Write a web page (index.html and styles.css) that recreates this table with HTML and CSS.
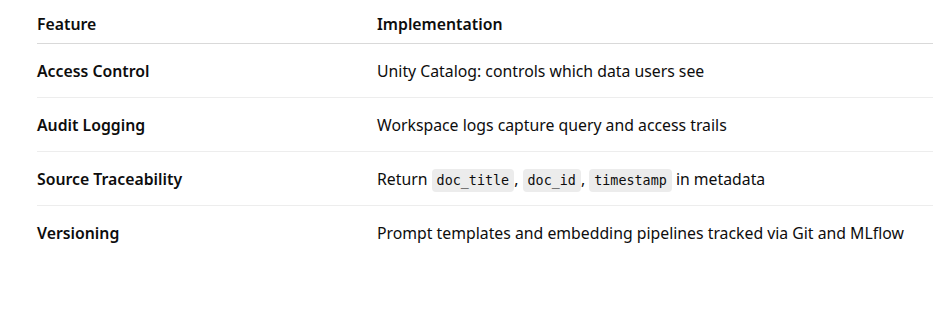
FILE: index.html
```html
<!DOCTYPE html>
<html lang="en">
<head>
  <meta charset="UTF-8" />
  <title>Governance Features</title>
  <link rel="stylesheet" href="styles.css">
</head>
<body>
  <div class="table-wrap">
    <table class="features">
      <thead>
        <tr>
          <th class="col-feature">Feature</th>
          <th>Implementation</th>
        </tr>
      </thead>
      <tbody>
        <tr>
          <td class="col-feature">Access Control</td>
          <td>Unity Catalog: controls which data users see</td>
        </tr>
        <tr>
          <td class="col-feature">Audit Logging</td>
          <td>Workspace logs capture query and access trails</td>
        </tr>
        <tr>
          <td class="col-feature">Source Traceability</td>
          <td>Return <code>doc_title</code>, <code>doc_id</code>, <code>timestamp</code> in metadata</td>
        </tr>
        <tr>
          <td class="col-feature">Versioning</td>
          <td>Prompt templates and embedding pipelines tracked via Git and MLflow</td>
        </tr>
      </tbody>
    </table>
  </div>
</body>
</html>
```
FILE: styles.css
```css
body {
  margin: 0;
  font-family: "Noto Sans", "Open Sans", sans-serif;
  background-color: #ffffff;
  color: #0d0d0d;
}

.table-wrap {
  padding-left: 37px;
}

.features {
  width: 100%;
  border-collapse: collapse;
  font-size: 15.8px;
  line-height: 24px;
}

.features th {
  text-align: left;
  font-weight: 600;
  padding: 12px 0 7px;
  border-bottom: 1px solid #d9d9d9;
}

.features td {
  height: 24px;
  padding: 15px 0 14px;
  border-bottom: 1px solid #ededed;
}

.features tbody tr:last-child td {
  border-bottom: none;
}

.features .col-feature {
  width: 340px;
  font-weight: 600;
}

.features code {
  font-family: "DejaVu Sans Mono", "Liberation Mono", monospace;
  font-size: 13.4px;
  line-height: 1;
  background-color: #ececec;
  border-radius: 4px;
  padding: 4px 5px;
}
```
